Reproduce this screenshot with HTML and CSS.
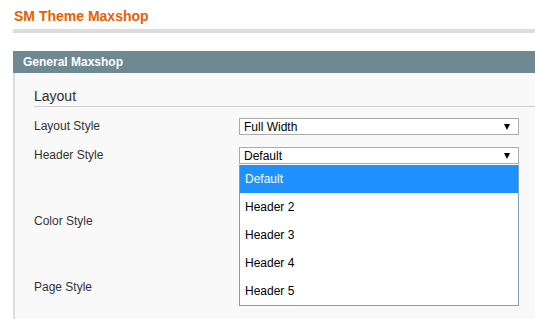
FILE: index.html
```html
<!DOCTYPE html>
<html lang="en">
<head>
    <meta charset="UTF-8">
    <meta name="viewport" content="width=device-width, initial-scale=1.0">
    <title>SM Theme Maxshop</title>
    <link rel="stylesheet" href="styles.css">
</head>
<body>
    <h1 class="page-title">SM Theme Maxshop</h1>
    <div class="title-rule"></div>

    <div class="section">
        <div class="section-head">General Maxshop</div>
        <div class="section-body">
            <div class="group-title">Layout</div>

            <div class="row">
                <label class="row-label">Layout Style</label>
                <div class="field">
                    <div class="select">
                        <span>Full Width</span>
                        <i class="arrow"></i>
                    </div>
                </div>
            </div>

            <div class="row with-note">
                <label class="row-label">Header Style</label>
                <div class="field">
                    <div class="select">
                        <span>Default</span>
                        <i class="arrow"></i>
                    </div>
                    <!-- open dropdown -->
                    <ul class="options">
                        <li class="selected">Default</li>
                        <li>Header 2</li>
                        <li>Header 3</li>
                        <li>Header 4</li>
                        <li>Header 5</li>
                    </ul>
                </div>
            </div>

            <!-- these two selects sit under the open list -->
            <div class="row with-note">
                <label class="row-label">Color Style</label>
                <div class="field">
                    <div class="select">
                        <span></span>
                        <i class="arrow"></i>
                    </div>
                </div>
            </div>

            <div class="row">
                <label class="row-label">Page Style</label>
                <div class="field">
                    <div class="select">
                        <span></span>
                        <i class="arrow"></i>
                    </div>
                </div>
            </div>
        </div>
    </div>
</body>
</html>
```

FILE: styles.css
```css
* {
    margin: 0;
    padding: 0;
    box-sizing: border-box;
}

body {
    font-family: "Liberation Sans", Arial, sans-serif;
    background-color: #fff;
    color: #2f2f2f;
    height: 319px;
    overflow: hidden;
}

.page-title {
    font-size: 14px;
    line-height: 16px;
    font-weight: bold;
    color: #eb5e00;
    padding: 8px 0 0 14px;
}

.title-rule {
    height: 4px;
    background-color: #dddddd;
    margin: 5px 0 0 13px;
}

.section {
    margin: 18px 0 0 13px;
}

.section-head {
    height: 22px;
    line-height: 22px;
    padding-left: 10px;
    background-color: #6f8992;
    color: #fff;
    font-size: 12px;
    font-weight: bold;
}

.section-body {
    background-color: #f9f9f9;
    border-left: 2px solid #dcdcdc;
    padding-left: 19px;
    height: 246px;
}

.group-title {
    font-size: 14px;
    line-height: 18px;
    padding-top: 14px;
    padding-bottom: 1px;
    border-bottom: 1px solid #cccccc;
    margin-bottom: 11px;
    color: #2f2f2f;
}

.row {
    display: flex;
    align-items: flex-start;
    margin-bottom: 12px;
}

.row.with-note {
    padding-bottom: 37px;
}

.row-label {
    width: 205px;
    font-size: 12px;
    line-height: 17px;
    color: #333;
}

.field {
    position: relative;
    width: 280px;
}

.select {
    height: 17px;
    border: 1px solid #aaaaaa;
    background-color: #fff;
    display: flex;
    align-items: center;
    justify-content: space-between;
    padding: 0 8px 0 4px;
    font-size: 12px;
    color: #000;
}

.arrow {
    width: 0;
    height: 0;
    border-left: 3px solid transparent;
    border-right: 3px solid transparent;
    border-top: 6px solid #000;
}

.options {
    position: absolute;
    top: 18px;
    left: 0;
    width: 280px;
    list-style: none;
    background-color: #fff;
    border: 1px solid #7f9db9;
    border-top: none;
    z-index: 2;
}

.options li {
    height: 28px;
    line-height: 28px;
    padding-left: 5px;
    font-size: 12px;
    color: #000;
}

.options li.selected {
    background-color: #1e90ff;
    color: #fff;
}
```
